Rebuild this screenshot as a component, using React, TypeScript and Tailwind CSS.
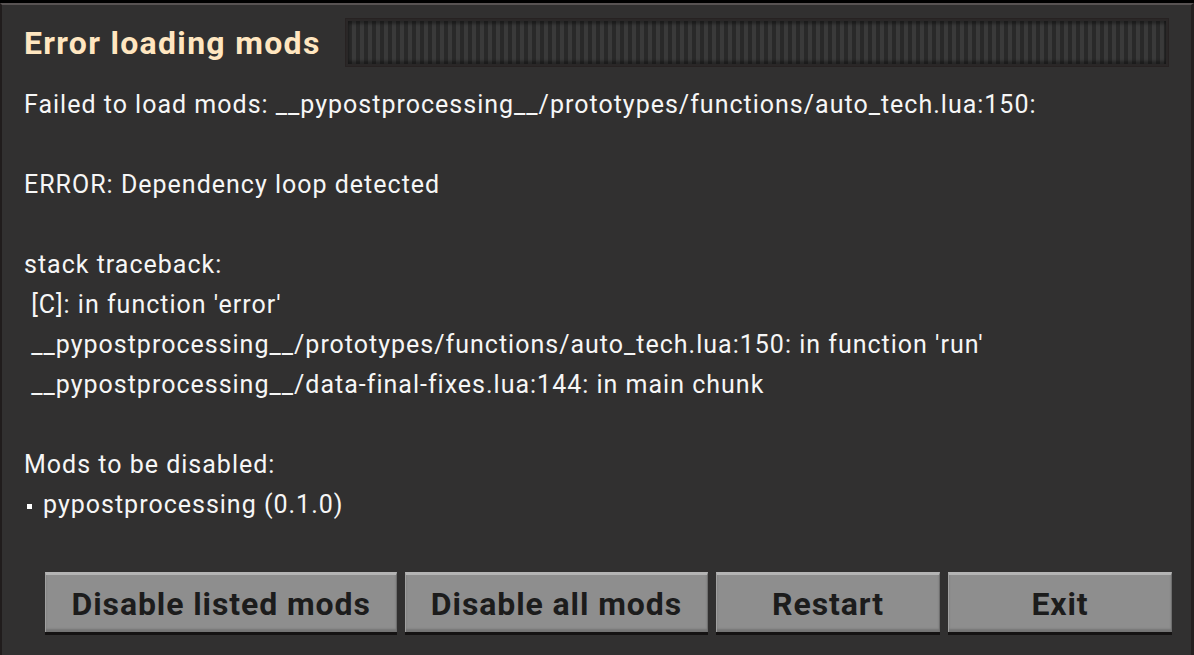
import React from "react";

const lines: string[] = [
  "Failed to load mods: __pypostprocessing__/prototypes/functions/auto_tech.lua:150:",
  "",
  "ERROR: Dependency loop detected",
  "",
  "stack traceback:",
  " [C]: in function 'error'",
  " __pypostprocessing__/prototypes/functions/auto_tech.lua:150: in function 'run'",
  " __pypostprocessing__/data-final-fixes.lua:144: in main chunk",
  "",
  "Mods to be disabled:",
];

function Button({ label, wide }: { label: string; wide?: boolean }) {
  return (
    <div className="flex flex-col">
      <div
        className={`h-[60px] ${wide ? "px-[25px]" : "w-[224px]"} flex items-center justify-center bg-[#8e8e8e] border-t-[3px] border-[#b4b4b4] border-l border-r border-l-[#a0a0a0] border-r-[#6e6e6e] shadow-[inset_0_-3px_2px_rgba(0,0,0,0.18)]`}
      >
        <span className="text-[32px] font-bold text-[#1c1c1c] leading-none tracking-[0.9px]">{label}</span>
      </div>
      <div className="h-[3px] bg-[#141212]" />
    </div>
  );
}

export default function App() {
  return (
    <div
      className="w-[1194px] h-[655px] bg-black pt-[3px] overflow-hidden"
      style={{ fontFamily: "Roboto, 'Open Sans', sans-serif" }}
    >
      <div className="h-full bg-[#313030] border-t-2 border-t-[#585353] border-l-2 border-l-[#201c1c] border-r-[3px] border-r-[#242020] flex flex-col">
        <div className="flex items-center pl-[22px] pr-[22px] mt-[13px] h-[49px] gap-[24px]">
          <div className="text-[32px] font-bold text-[#ffe6c0] leading-none whitespace-nowrap tracking-[1.3px]">
            Error loading mods
          </div>
          <div className="flex-1 h-[49px] border border-[#272222] p-[2px] bg-[#2a2727]">
            <div className="h-full bg-[repeating-linear-gradient(90deg,#292929_0px,#292929_4px,#3a3a3a_4px,#3a3a3a_8px)] shadow-[inset_0_3px_3px_rgba(0,0,0,0.35),inset_0_-3px_3px_rgba(0,0,0,0.35)]" />
          </div>
        </div>
        <div className="mt-[18px] pl-[22px] text-[#f6f6f6] text-[25px] leading-[40px] whitespace-pre tracking-[1px]">
          {lines.map((l, i) => (
            <div key={i} className="h-[40px]">
              {l}
            </div>
          ))}
          <div className="h-[40px] flex items-center">
            <span className="w-[5px] h-[5px] bg-white ml-[3px] mr-[11px] mt-[2px]" />
            <span>pypostprocessing (0.1.0)</span>
          </div>
        </div>
        <div className="mt-[47px] flex justify-end gap-[8px] pr-[19px]">
          <Button label="Disable listed mods" wide />
          <Button label="Disable all mods" wide />
          <Button label="Restart" />
          <Button label="Exit" />
        </div>
      </div>
    </div>
  );
}
